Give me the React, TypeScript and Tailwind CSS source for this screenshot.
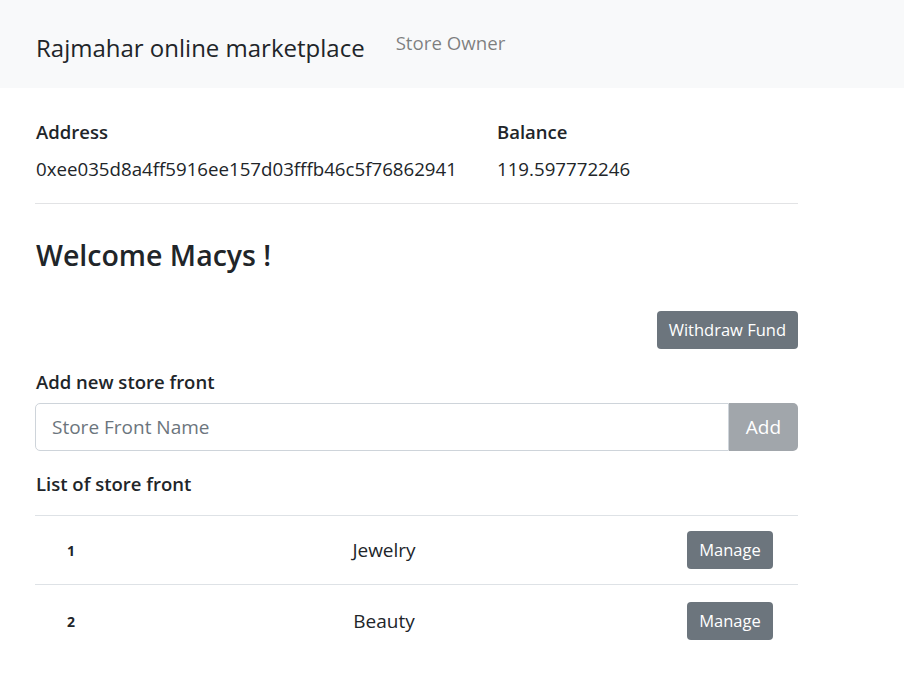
const FONT = "font-['Open_Sans','Noto_Sans',sans-serif]";

const STORES = [
  { id: 1, name: 'Jewelry' },
  { id: 2, name: 'Beauty' },
];

export default function App() {
  return (
    <div className={`${FONT} min-h-[698px] bg-white text-[#212529]`}>
      {/* Navbar */}
      <nav className="h-[88px] bg-[#f8f9fa] flex items-center pl-[36px]">
        <span className="text-[24px] leading-[30px] mt-[8px] text-[#212529]">Rajmahar online marketplace</span>
        <span className="ml-[31px] text-[18.7px] text-black/50 mb-[2px]">Store Owner</span>
      </nav>

      <main className="w-[763px] ml-[35px]">
        {/* Account info */}
        <div className="flex pt-[31px] pb-[21px] px-px">
          <div className="w-[461px]">
            <div className="text-[18.5px] font-semibold leading-[26px]">Address</div>
            <div className="text-[18.7px] leading-[26px] mt-[11px]">0xee035d8a4ff5916ee157d03fffb46c5f76862941</div>
          </div>
          <div>
            <div className="text-[18.5px] font-semibold leading-[26px]">Balance</div>
            <div className="text-[18.7px] leading-[26px] mt-[11px]">119.597772246</div>
          </div>
        </div>
        <hr className="border-t border-[#e2e3e5]" />

        <h3 className="text-[28.5px] font-semibold leading-[34px] mt-[34px] px-px">Welcome Macys !</h3>

        <div className="flex justify-end mt-[39px]">
          <button className="h-[38px] px-[12px] rounded-[4px] bg-[#6c757d] text-white text-[16.5px]">Withdraw Fund</button>
        </div>

        <div className="text-[18.5px] font-semibold leading-[26px] mt-[20px] px-px">Add new store front</div>
        <div className="flex mt-[8px] h-[48px]">
          <input
            className="flex-1 min-w-0 border border-[#ced4da] rounded-l-[5px] px-[16px] text-[19px] text-[#495057] placeholder:text-[#6c757d] outline-none"
            placeholder="Store Front Name"
          />
          <button className="w-[69px] rounded-r-[5px] bg-[#a1a6ab] text-white text-[19px]">Add</button>
        </div>

        <div className="text-[18.5px] font-semibold leading-[26px] mt-[20px] px-px">List of store front</div>

        <div className="mt-[18px]">
          {STORES.map((s, i) => (
            <div
              key={s.id}
              className={`grid grid-cols-[170px_1fr_235px] items-center border-t border-[#dee2e6] ${i === 0 ? 'h-[69px]' : 'h-[71px] pt-[2px]'}`}
            >
              <div className="pl-[32px] text-[14px] font-bold">{s.id}</div>
              <div className="text-center text-[19px]">{s.name}</div>
              <div className="flex justify-end pr-[25px]">
                <button className="h-[38px] w-[86px] rounded-[4px] bg-[#6c757d] text-white text-[16.5px]">Manage</button>
              </div>
            </div>
          ))}
        </div>
      </main>
    </div>
  );
}
